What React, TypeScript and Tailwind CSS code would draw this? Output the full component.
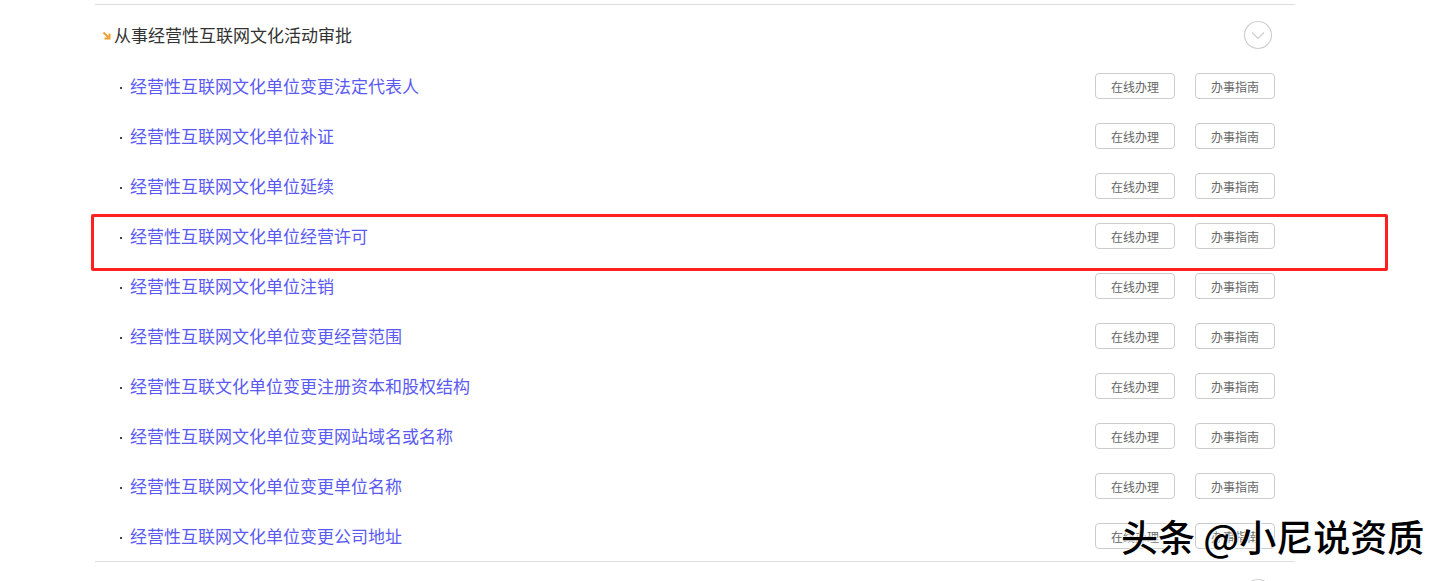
import React from 'react';

const items = [
  '经营性互联网文化单位变更法定代表人',
  '经营性互联网文化单位补证',
  '经营性互联网文化单位延续',
  '经营性互联网文化单位经营许可',
  '经营性互联网文化单位注销',
  '经营性互联网文化单位变更经营范围',
  '经营性互联文化单位变更注册资本和股权结构',
  '经营性互联网文化单位变更网站域名或名称',
  '经营性互联网文化单位变更单位名称',
  '经营性互联网文化单位变更公司地址',
];

const font = "font-['Microsoft_YaHei','Noto_Sans_CJK_SC',sans-serif]";

const CircleToggle = () => (
  <svg width="30" height="30" viewBox="0 0 30 30" className="block">
    <circle cx="15" cy="15" r="13.5" fill="none" stroke="#cfcfcf" strokeWidth="1.2" />
    <path d="M9 12.5 L15 18.5 L21 12.5" fill="none" stroke="#cfcfcf" strokeWidth="1.2" />
  </svg>
);

const Arrow = () => (
  <svg width="9" height="9" viewBox="0 0 9 9" className="block">
    <path d="M1.5 1.5 L6.5 6.5" stroke="#f0a030" strokeWidth="2" />
    <path d="M2.5 7.5 L7.5 7.5 L7.5 2.5" fill="none" stroke="#f0a030" strokeWidth="2" />
  </svg>
);

const Btn = ({ label }: { label: string }) => (
  <button className="w-[80px] h-[26px] pt-[2px] border border-[#cccccc] rounded-[4px] bg-white text-[12px] text-[#666666] leading-none">
    {label}
  </button>
);

const App = () => {
  return (
    <div className={`relative w-[1440px] h-[581px] bg-white overflow-hidden ${font}`}>
      <div className="pt-[4px] pl-[95px]">
        <div className="w-[1200px] border-t border-[#dddddd]">
          {/* 标题 */}
          <div className="h-[56px] pt-[4px] flex items-center pl-[7px] pr-[22px]">
            <Arrow />
            <span className="ml-[3px] text-[17px] text-[#333333]">从事经营性互联网文化活动审批</span>
            <div className="ml-auto">
              <CircleToggle />
            </div>
          </div>

          {/* 列表 */}
          {items.map((item) => (
            <div key={item} className="h-[50px] flex items-center pl-[25px] pr-[20px]">
              <span className="w-[2px] h-[2px] mt-[3px] bg-[#444444] mr-[8px]"></span>
              <a className="text-[17px] text-[#5a5af2] cursor-pointer">{item}</a>
              <div className="ml-auto flex gap-[20px]">
                <Btn label="在线办理" />
                <Btn label="办事指南" />
              </div>
            </div>
          ))}
        </div>

        <div className="w-[1200px] border-t border-[#dddddd]">
          <div className="h-[56px] pt-[6px] flex items-center pl-[7px] pr-[22px]">
            <div className="ml-auto">
              <CircleToggle />
            </div>
          </div>
        </div>
      </div>

      {/* 红框标注 */}
      <div className="absolute left-[91px] top-[214px] w-[1297px] h-[57px] border-[3px] border-[#ff2020] rounded-[2px]"></div>

      {/* 水印 */}
      <div className="absolute left-[1121px] top-[518px] text-[37px] leading-none font-medium text-black font-['Noto_Sans_CJK_SC',sans-serif] [text-shadow:0_0_2px_#fff,0_0_3px_#fff,1px_1px_2px_#fff]">
        头条 @小尼说资质
      </div>
    </div>
  );
};

export default App;
